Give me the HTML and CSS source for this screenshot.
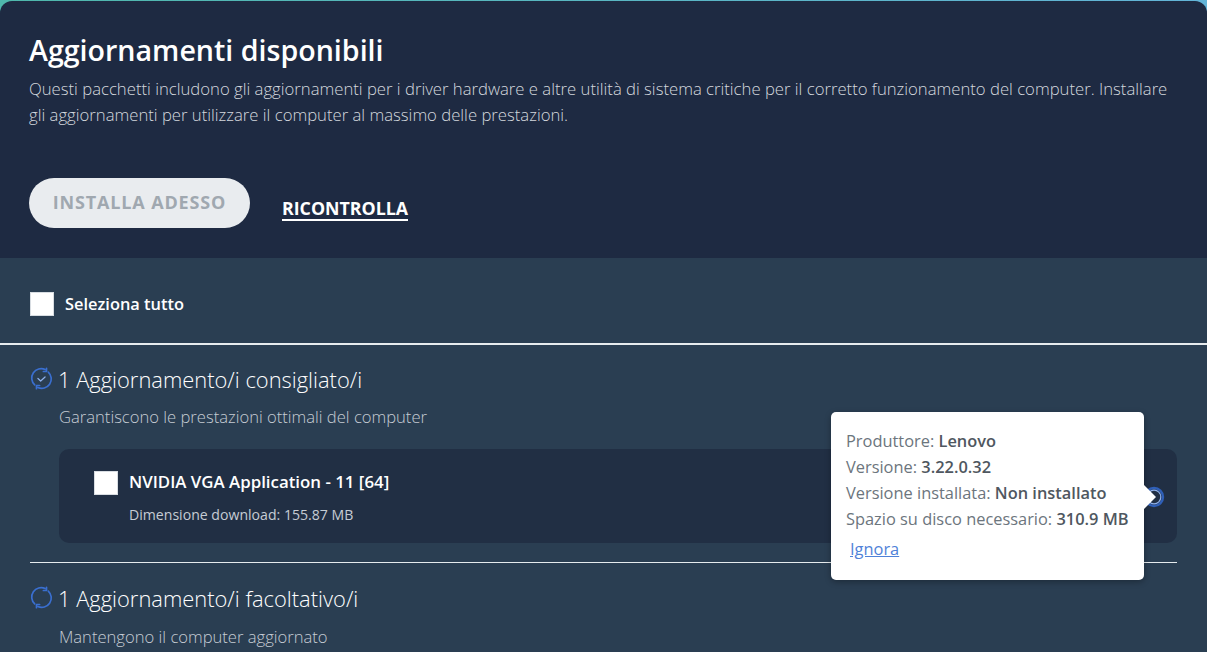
FILE: index.html
```
<!DOCTYPE html>
<html lang="it">
<head>
<meta charset="utf-8">
<title>Aggiornamenti disponibili</title>
<link rel="stylesheet" href="styles.css">
</head>
<body>
<div class="app">
  <header class="top">
    <h1 class="title">Aggiornamenti disponibili</h1>
    <p class="intro">Questi pacchetti includono gli aggiornamenti per i driver hardware e altre utilità di sistema critiche per il corretto funzionamento del computer. Installare gli aggiornamenti per utilizzare il computer al massimo delle prestazioni.</p>
    <div class="actions">
      <button class="install">INSTALLA ADESSO</button>
      <a class="recheck">RICONTROLLA</a>
    </div>
  </header>
  <main class="content">
    <div class="select-all">
      <span class="box"></span>
      <span class="select-label">Seleziona tutto</span>
    </div>
    <section class="group">
      <div class="group-head">
        <svg class="sync" viewBox="0 0 22 22" fill="none" stroke="#3a6fd0" stroke-width="1.6" stroke-linecap="round" stroke-linejoin="round">
          <path d="M14.5 2.5A9 9 0 0 0 4.5 17.2"/><path d="M7.5 19.5A9 9 0 0 0 17.5 4.8"/>
          <path d="M15.8 1.2v3.1h-3"/><path d="M6.2 20.8v-3.1h3"/>
          <path d="M7.6 11l2.6 2.4 4.2-3.8" stroke="#8fb0ea" stroke-width="1.2"/>
        </svg>
        <h2 class="group-title">1 Aggiornamento/i consigliato/i</h2>
      </div>
      <p class="group-sub">Garantiscono le prestazioni ottimali del computer</p>
      <div class="card">
        <span class="box"></span>
        <div class="card-text">
          <div class="card-name">NVIDIA VGA Application - 11 [64]</div>
          <div class="card-size">Dimensione download: 155.87 MB</div>
        </div>
        <svg class="chev" viewBox="0 0 22 22" fill="none"><circle cx="11" cy="11" r="9" stroke="#2f5fb8" stroke-width="2.4"/><circle cx="11" cy="11" r="6.8" stroke="#8fb0ea" stroke-width="1.2"/></svg>
      </div>
    </section>
    <section class="group second">
      <div class="group-head">
        <svg class="sync" viewBox="0 0 22 22" fill="none" stroke="#3a6fd0" stroke-width="1.6" stroke-linecap="round" stroke-linejoin="round">
          <path d="M14.5 2.5A9 9 0 0 0 4.5 17.2"/><path d="M7.5 19.5A9 9 0 0 0 17.5 4.8"/>
          <path d="M15.8 1.2v3.1h-3"/><path d="M6.2 20.8v-3.1h3"/>
        </svg>
        <h2 class="group-title">1 Aggiornamento/i facoltativo/i</h2>
      </div>
      <p class="group-sub">Mantengono il computer aggiornato</p>
    </section>
  </main>
  <aside class="tip">
    <div class="tip-line">Produttore: <b>Lenovo</b></div>
    <div class="tip-line">Versione: <b>3.22.0.32</b></div>
    <div class="tip-line">Versione installata: <b>Non installato</b></div>
    <div class="tip-line">Spazio su disco necessario: <b>310.9 MB</b></div>
    <a class="tip-link">Ignora</a>
  </aside>
</div>
</body>
</html>
```
FILE: styles.css
```
* { box-sizing: border-box; }
html, body { margin: 0; height: 100%; overflow: hidden; }
body { font-family: "Open Sans", "Noto Sans", sans-serif; }
.app {
  position: relative;
  width: 1207px;
  height: 652px;
  overflow: hidden;
  padding-top: 1px;
  background: linear-gradient(90deg, #4fb8ac, #63b4d8);
}
.top {
  height: 257px;
  padding: 31px 30px 0 29px;
  background: #1e2a42;
  border-radius: 12px 12px 0 0;
}
.title {
  margin: 0;
  font-size: 28.6px;
  line-height: 36px;
  font-weight: 600;
  color: #fff;
}
.intro {
  margin: 8px 0 0;
  font-size: 16.7px;
  line-height: 26px;
  font-weight: 300;
  color: #d4d8de;
}
.actions {
  display: flex;
  align-items: flex-start;
  gap: 32px;
  margin-top: 50px;
}
.install {
  width: 221px;
  height: 50px;
  padding: 0 0 2px;
  border: 0;
  border-radius: 25px;
  background: #e9ecef;
  color: #a0a8b0;
  font: 700 18px/1 "Open Sans", sans-serif;
  letter-spacing: 0.85px;
}
.recheck {
  margin-top: 20px;
  border-bottom: 2px solid #fff;
  color: #fff;
  font-size: 17.8px;
  line-height: 21px;
  font-weight: 700;
}
.content {
  height: 394px;
  background: #2a3e52;
  color: #fff;
}
.select-all {
  display: flex;
  align-items: center;
  gap: 11px;
  height: 87px;
  padding: 6px 30px 0;
  border-bottom: 2px solid #e6ebee;
}
.box {
  flex: none;
  width: 24px;
  height: 24px;
  background: #fff;
  border: 1px solid #d8dde2;
}
.select-label {
  font-size: 16.4px;
  font-weight: 600;
}
.group { margin: 0 30px; }
.group-head {
  display: flex;
  align-items: center;
  gap: 6px;
  height: 34px;
  margin-top: 18px;
}
.sync { flex: none; width: 23px; height: 23px; margin: -3px -1px 0 0; }
.group-title {
  margin: 0;
  font-size: 21.9px;
  line-height: 30px;
  font-weight: 300;
  color: #fff;
}
.group-sub {
  margin: 8px 0 0 29px;
  font-size: 16.6px;
  line-height: 24px;
  font-weight: 300;
  color: #c6ccd4;
}
.card {
  display: flex;
  align-items: flex-start;
  gap: 11px;
  height: 94px;
  margin: 20px 0 19px 29px;
  padding: 22px 12px 0 35px;
  background: #212f44;
  border-radius: 10px;
}
.card-text { flex: 1; }
.card-name {
  font-size: 16.85px;
  line-height: 22px;
  font-weight: 600;
}
.card-size {
  margin-top: 12px;
  font-size: 14.1px;
  line-height: 20px;
  font-weight: 400;
  color: #c6ccd4;
}
.chev { flex: none; width: 22px; height: 22px; margin-top: 15px; }
.second { border-top: 1px solid #e6ebee; }
.second .group-head { margin-top: 19px; }
.second .group-sub { margin-top: 9px; }
.tip {
  position: absolute;
  left: 831px;
  top: 412px;
  width: 313px;
  height: 168px;
  padding: 16px 15px 0;
  background: #fff;
  border-radius: 5px;
  box-shadow: 0 2px 6px rgba(0, 0, 0, .3);
  color: #6c757d;
  font-size: 16.4px;
}
.tip::after {
  content: "";
  position: absolute;
  left: 100%;
  top: 73px;
  border: 12px solid transparent;
  border-left-color: #fff;
  border-right-width: 0;
}
.tip-line { line-height: 26px; white-space: nowrap; }
.tip-line b { font-weight: 600; color: #4f5760; }
.tip-link {
  display: inline-block;
  margin: 5px 0 0 4px;
  color: #4f82d8;
  text-decoration: underline;
  line-height: 24px;
}
```
